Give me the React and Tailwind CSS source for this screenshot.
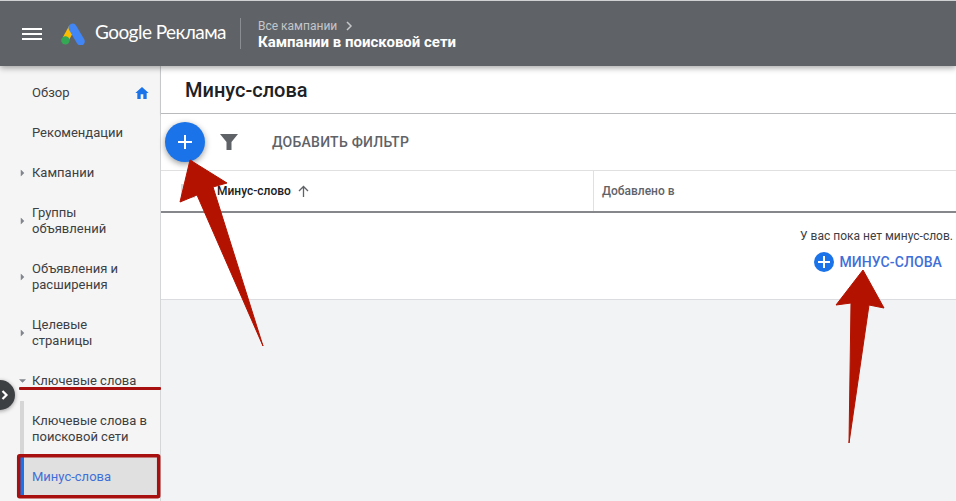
import React from 'react';

const navItems = [
  { label: 'Обзор', home: true },
  { label: 'Рекомендации' },
  { label: 'Кампании', caret: true },
  { label: 'Группы объявлений', caret: true, tall: true },
  { label: 'Объявления и расширения', caret: true, tall: true },
  { label: 'Целевые страницы', caret: true, tall: true },
];

const Caret = ({ open }) => (
  <svg className="absolute left-[19px] top-1/2 -translate-y-1/2 w-[7px] h-[7px]" viewBox="0 0 8 8" fill="#80868b">
    <path d={open ? 'M0 2h8L4 6z' : 'M2 0v8l4-4z'} />
  </svg>
);

const Logo = () => (
  <svg className="w-[24px] h-[22px]" viewBox="0 0 24 22">
    <path d="M8 3 2 14l6 3 6-11z" fill="#fbbc04" />
    <path d="M9.5 1.2a4.2 4.2 0 0 1 5.7 1.5l8 13.6a4.1 4.1 0 0 1-7.1 4.2l-8-13.6a4.1 4.1 0 0 1 1.4-5.7z" fill="#4285f4" />
    <circle cx="4.4" cy="17.4" r="4.2" fill="#34a853" />
  </svg>
);

const App = () => {
  return (
    <div className="relative w-[956px] h-[501px] overflow-hidden bg-[#f1f3f4] font-['Roboto',sans-serif]">
      {/* Header */}
      <header className="relative z-10 h-[66px] flex items-center bg-[#5f6368] border-t border-[#d0d1d3] shadow-[0_2px_6px_rgba(0,0,0,0.35)]">
        <svg className="ml-[22px] w-[20px] h-[12px]" viewBox="0 0 20 12" fill="#fff">
          <rect y="0" width="20" height="2" />
          <rect y="5" width="20" height="2" />
          <rect y="10" width="20" height="2" />
        </svg>
        <div className="ml-[19px]">
          <Logo />
        </div>
        <span className="ml-[10px] w-[132px] pb-[2px] text-[19px] tracking-[-0.55px] text-white font-['Lato',sans-serif] whitespace-nowrap">Google Реклама</span>
        <div className="ml-[13px] w-px h-[31px] bg-[#8a8d91]" />
        <div className="ml-[17px] flex flex-col">
          <div className="flex items-center gap-[9px] h-[16px] mt-[1px] text-[12px] text-[#c4c6c8]">
            Все кампании
            <svg className="w-[7px] h-[10px]" viewBox="0 0 7 10" fill="none" stroke="#c4c6c8" strokeWidth="1.5">
              <path d="m1 1 4 4-4 4" />
            </svg>
          </div>
          <div className="text-[15px] leading-[17px] font-bold text-white">Кампании в поисковой сети</div>
        </div>
      </header>

      <div className="flex h-[435px]">
        {/* Sidebar */}
        <aside className="w-[161px] shrink-0 pt-[7px] bg-[#f5f5f5] border-r border-[#d5d6d8] text-[13px] leading-[16px] text-[#3c4043]">
          {navItems.map((item) => (
            <div key={item.label} className={`relative flex items-center pl-[32px] pr-[22px] ${item.tall ? 'h-[56px]' : 'h-[40px]'}`}>
              {item.caret && <Caret />}
              <span className={item.tall ? 'w-[100px]' : ''}>{item.label}</span>
              {item.home && (
                <svg className="absolute left-[134px] top-[12px] w-[16px] h-[16px]" viewBox="0 0 24 24" fill="#1a73e8">
                  <path d="M10 21v-7h4v7h5v-9h3L12 3 2 12h3v9z" />
                </svg>
              )}
            </div>
          ))}
          <div className="relative flex items-center h-[40px] pl-[32px]">
            <Caret open />
            Ключевые слова
          </div>
          <div className="ml-[20px] border-l-4 border-[#d6d6d6]">
            <div className="flex items-center h-[56px] pl-[8px] pr-[4px]">Ключевые слова в поисковой сети</div>
            <div className="relative -ml-[4px] flex items-center h-[40px] pl-[8px] bg-[#e0e0e0] border-l-4 border-[#1a73e8] text-[#3f6fd8]">
              Минус-слова
            </div>
          </div>
        </aside>

        {/* Main */}
        <main className="flex-1 min-w-0">
          <div className="h-[48px] flex items-center pl-[24px] bg-white border-b border-[#b9babc] shadow-[0_1px_2px_rgba(0,0,0,0.2)]">
            <h1 className="text-[20px] font-medium text-[#202124]">Минус-слова</h1>
          </div>
          <div className="h-[57px] flex items-center pl-[4px] bg-white border-b border-[#e0e0e0]">
            <button className="w-[40px] h-[40px] rounded-full bg-[#1a73e8] shadow-[0_2px_6px_rgba(0,0,0,0.4)] flex items-center justify-center">
              <svg className="w-[14px] h-[14px]" viewBox="0 0 14 14" fill="#fff">
                <path d="M6 0h2v6h6v2H8v6H6V8H0V6h6z" />
              </svg>
            </button>
            <svg className="ml-[15px] w-[18px] h-[18px]" viewBox="0 0 18 18" fill="#5f6368">
              <path d="M0 1h18l-6.5 8v8h-5V9z" />
            </svg>
            <span className="ml-[34px] text-[14px] font-medium tracking-[0.25px] text-[#5f6368]">ДОБАВИТЬ ФИЛЬТР</span>
          </div>
          <div className="h-[42px] flex bg-white border-b-2 border-[#85878a] text-[12px]">
            <div className="w-[433px] flex items-center pl-[20px] border-r border-[#e0e0e0]">
              <span className="w-[14px] h-[14px] bg-[#dcdcdc]" />
              <span className="ml-[22px] font-medium text-[#202124]">Минус-слово</span>
              <svg className="ml-[6px] w-[13px] h-[13px]" viewBox="0 0 13 13" fill="none" stroke="#5f6368" strokeWidth="1.3">
                <path d="M6.5 12V2M2 6l4.5-4.5L11 6" />
              </svg>
            </div>
            <div className="flex-1 flex items-center pl-[8px] font-medium text-[#5f6368]">Добавлено в</div>
          </div>
          <div className="h-[87px] flex flex-col items-end bg-white border-b border-[#dadce0] pt-[15px] pr-[3px]">
            <p className="text-[12px] leading-[16px] text-[#3c4043]">У вас пока нет минус-слов.</p>
            <button className="mt-[8px] mr-[11px] flex items-center gap-[5px] text-[14px] leading-[20px] font-medium tracking-[0.1px] text-[#3f6fd8]">
              <svg className="w-[20px] h-[20px]" viewBox="0 0 20 20">
                <circle cx="10" cy="10" r="10" fill="#1a73e8" />
                <path d="M9 4h2v5h5v2h-5v5H9v-5H4V9h5z" fill="#fff" />
              </svg>
              МИНУС-СЛОВА
            </button>
          </div>
        </main>
      </div>

      {/* Sidebar collapse toggle */}
      <button className="absolute z-20 left-[-15px] top-[380px] w-[30px] h-[30px] rounded-full bg-[#3c4043] shadow-[0_1px_4px_rgba(0,0,0,0.4)] flex items-center justify-end pr-[6px]">
        <svg className="w-[8px] h-[10px]" viewBox="0 0 8 10" fill="none" stroke="#fff" strokeWidth="2.2">
          <path d="m1.5 1 4 4-4 4" />
        </svg>
      </button>

      {/* Red annotations drawn over the screenshot */}
      <svg className="absolute inset-0 z-30 pointer-events-none" width="956" height="501" viewBox="0 0 956 501">
        <path d="M190 160 227 183 213 187 263 346 197 195 180 202z" fill="#b31200" stroke="#b31200" strokeLinejoin="round" />
        <path d="M863 270 884 308 869 305 849 443 851 303 836 305z" fill="#b31200" stroke="#b31200" strokeLinejoin="round" />
        <rect x="19" y="387" width="142" height="3" rx="1" fill="#a80f0f" />
        <rect x="18.7" y="455.7" width="140" height="41" rx="1" fill="none" stroke="#a80f0f" strokeWidth="3.5" />
      </svg>
    </div>
  );
};

export default App;
